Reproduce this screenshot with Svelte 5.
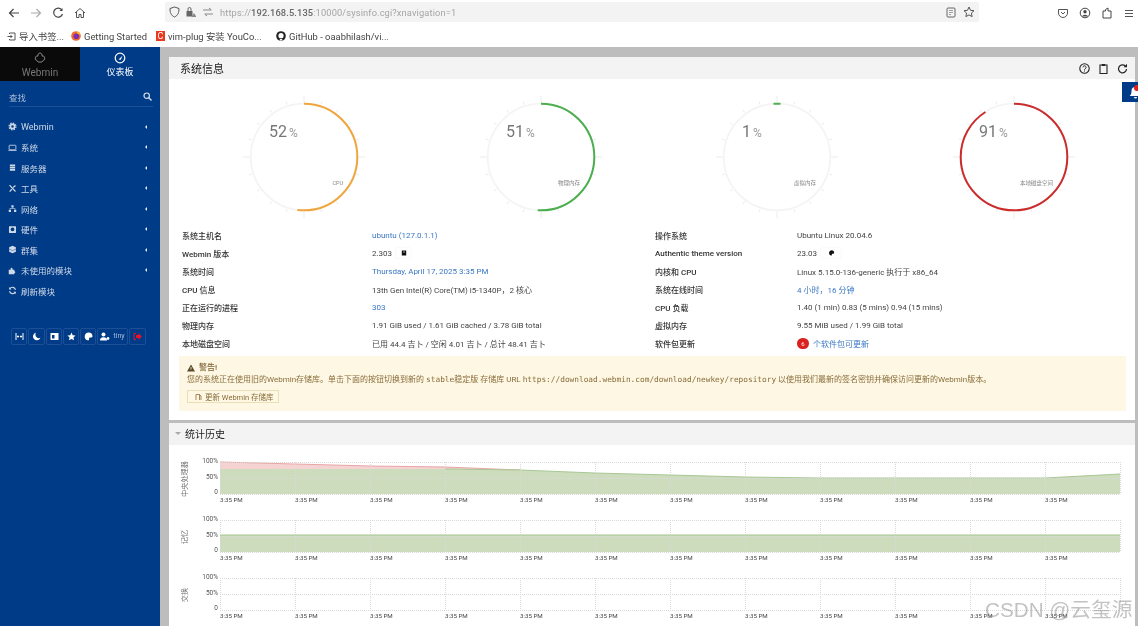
<script>
  const icons = {
    gear: '<circle cx="6" cy="6" r="2.8" fill="none" stroke="currentColor" stroke-width="2.2"/><circle cx="6" cy="6" r="4.6" fill="none" stroke="currentColor" stroke-width="1.6" stroke-dasharray="2 1.6"/>',
    laptop: '<rect x="1.5" y="3" width="9" height="6" rx=".6" fill="none" stroke="currentColor" stroke-width="1.1"/><path d="M0.5 10h11" stroke="currentColor" stroke-width="1"/>',
    server: '<path d="M2.5 2h7v2.2h-7zM2.5 5h7v2.2h-7zM2.5 8h7v2.2h-7z" fill="currentColor"/>',
    tools: '<path d="M2 1.5l8 8.5M10 2L6.8 4.6M2.2 10.2l3-3.2" stroke="currentColor" stroke-width="1.6" fill="none"/>',
    net: '<path d="M4.5 1.5h3v3h-3zM1 7.5h3v3H1zM8 7.5h3v3H8z" fill="currentColor"/><path d="M6 4.5v1.5M2.5 7.5V6h7v1.5" stroke="currentColor" stroke-width=".8" fill="none"/>',
    hw: '<path fill-rule="evenodd" d="M2 1.5h8a.7.7 0 0 1 .7.7v7.6a.7.7 0 0 1-.7.7H2a.7.7 0 0 1-.7-.7V2.200a.7.7 0 0 1 .7-.7zM6 3.200a2.600 2.600 0 1 0 0 5.200a2.600 2.600 0 0 0 0-5.200z" fill="currentColor"/>',
    cluster: '<path d="M6 1l4.500 2v6L6 11 1.500 9V3z" fill="currentColor"/><path d="M1.500 5.500L6 7.500l4.500-2" stroke="#003b87" stroke-width=".6" fill="none"/>',
    puzzle: '<path d="M1 5h2.500V3.500a1.300 1.300 0 0 1 2.600 0V5h2.400v2a1.200 1.200 0 0 1 0 2.400v1.600H1z" fill="currentColor"/>',
    sync: '<path d="M10 5A4.200 4.200 0 0 0 2.500 3.500M2 7a4.200 4.200 0 0 0 7.500 1.500" stroke="currentColor" stroke-width="1.500" fill="none"/><path d="M1.500 1.200v3.300h3.300zM10.500 10.800V7.500H7.200z" fill="currentColor"/>'
  };
  const menu = [
    { icon: 'gear', label: 'Webmin', arrow: true },
    { icon: 'laptop', label: '系统', arrow: true },
    { icon: 'server', label: '服务器', arrow: true },
    { icon: 'tools', label: '工具', arrow: true },
    { icon: 'net', label: '网络', arrow: true },
    { icon: 'hw', label: '硬件', arrow: true },
    { icon: 'cluster', label: '群集', arrow: true },
    { icon: 'puzzle', label: '未使用的模块', arrow: true },
    { icon: 'sync', label: '刷新模块', arrow: false }
  ];
  const gauges = [
    { pct: 52, color: '#f0a63f', label: 'CPU' },
    { pct: 51, color: '#4cae4f', label: '物理内存' },
    { pct: 1, color: '#4cae4f', label: '虚拟内存' },
    { pct: 91, color: '#cb2d2d', label: '本地磁盘空间' }
  ];
  const ticks = Array.from({ length: 20 }, (_, i) => i * 18);
  const labels = Array.from({ length: 12 }, (_, i) => 51 + i * 75);
  const vlines = Array.from({ length: 13 }, (_, i) => 51 + i * 75);
  const charts = [
    { title: '中央处理器' },
    { title: '记忆' },
    { title: '交换' }
  ];
  const cpuGreen = '51,14 276,14 351,15 426,18 501,20 576,22 651,23 876,23 951,19 951,39 51,39';
  const cpuRed = '51,7 126,9 201,11 276,12 351,15 276,14 51,14';
</script>

<div class="page">
  <header class="browser">
    <div class="nav">
      <div class="btns">
        <span class="bi"><svg width="12" height="12" viewBox="0 0 12 12"><path d="M11 6H1.500M5.500 2L1.500 6l4 4" fill="none" stroke="#444" stroke-width="1.200"/></svg></span>
        <span class="bi"><svg width="12" height="12" viewBox="0 0 12 12"><path d="M1 6h9.500M6.500 2l4 4-4 4" fill="none" stroke="#aaa" stroke-width="1.200"/></svg></span>
        <span class="bi"><svg width="12" height="12" viewBox="0 0 12 12"><path d="M10 3.200A4.500 4.500 0 1 0 10.500 7" fill="none" stroke="#444" stroke-width="1.200"/><path d="M10.500 1v3h-3z" fill="#444"/></svg></span>
        <span class="bi"><svg width="12" height="12" viewBox="0 0 12 12"><path d="M1 6l5-4.500L11 6M2.500 5v5.500h2.500V7.500h2v3h2.500V5" fill="none" stroke="#555" stroke-width="1"/></svg></span>
      </div>
      <div class="url">
        <svg class="u1" width="11" height="12" viewBox="0 0 11 12"><path d="M5.500 1L10 2.500c0 4-1 7-4.500 8.500C2 9.500 1 6.500 1 2.500z" fill="none" stroke="#555" stroke-width="1"/></svg>
        <svg class="u2" width="11" height="12" viewBox="0 0 11 12"><rect x="1.500" y="5" width="6" height="5.500" fill="#666"/><path d="M3 5V3a1.500 1.500 0 0 1 3 0v2" fill="none" stroke="#666"/><path d="M9 7l-2.500 4h5z" fill="#888"/></svg>
        <svg class="u3" width="12" height="10" viewBox="0 0 12 10"><path d="M1 3h8M7 1l2.500 2M11 7H3M5 9L2.500 7" fill="none" stroke="#888"/></svg>
        <span class="addr">https://<b>192.168.5.135</b>:10000/sysinfo.cgi?xnavigation=1</span>
        <svg class="u4" width="10" height="11" viewBox="0 0 10 11"><rect x="1" y="1" width="8" height="9" rx="1" fill="none" stroke="#666"/><path d="M3 3.500h4M3 5.500h4M3 7.500h2" stroke="#888" stroke-width=".8"/></svg>
        <svg class="u5" width="12" height="12" viewBox="0 0 12 12"><path d="M6 1l1.500 3.300 3.500.4-2.600 2.400.7 3.500L6 8.900l-3.100 1.700.7-3.500L1 4.700l3.500-.4z" fill="none" stroke="#555"/></svg>
      </div>
      <div class="tools">
        <span class="bi"><svg width="12" height="11" viewBox="0 0 12 11"><path d="M1.500 1.500h9v3.500a4.500 4.500 0 0 1-9 0z" fill="none" stroke="#555"/><path d="M4 4l2 2 2-2" fill="none" stroke="#555"/></svg></span>
        <span class="bi"><svg width="12" height="12" viewBox="0 0 12 12"><circle cx="6" cy="6" r="4.800" fill="none" stroke="#444"/><circle cx="6" cy="4.800" r="1.700" fill="#444"/><path d="M2.800 9.500a3.500 3 0 0 1 6.400 0z" fill="#444"/></svg></span>
        <span class="bi"><svg width="12" height="12" viewBox="0 0 12 12"><path d="M2 4h2.500V2.500L7 1v3h3v7H2z" fill="none" stroke="#444"/></svg></span>
        <span class="bi"><svg width="10" height="9" viewBox="0 0 10 9"><path d="M1 1.500h8M1 4.500h8M1 7.500h8" stroke="#555" stroke-width="1"/></svg></span>
      </div>
    </div>
    <div class="marks">
      <span class="mk m1"><svg width="9" height="9" viewBox="0 0 9 9"><path d="M2.500 2V1h5.500v7H2.500V7M0.500 4.500H5M3.500 3L5 4.500 3.500 6" fill="none" stroke="#444" stroke-width=".9"/></svg>导入书签...</span>
      <span class="mk m2"><svg width="10" height="10" viewBox="0 0 10 10"><circle cx="5" cy="5" r="4.800" fill="#f26a2a"/><circle cx="5.300" cy="5.300" r="2.800" fill="#7a2fb8"/><path d="M5 .3a4.700 4.700 0 0 1 4.500 3.500L7 3z" fill="#ffbd2e"/></svg>Getting Started</span>
      <span class="mk m3"><span class="csdn">C</span>vim-plug 安装 YouCo...</span>
      <span class="mk m4"><svg width="10" height="10" viewBox="0 0 10 10"><circle cx="5" cy="5" r="4.800" fill="#222"/><circle cx="5" cy="4.700" r="2.600" fill="#fff"/><path d="M3.800 9.500V8h2.400v1.500z" fill="#fff"/></svg>GitHub - oaabhilash/vi...</span>
    </div>
  </header>

  <div class="body">
    <aside class="side">
      <div class="tabs">
        <div class="tab dark">
          <svg width="12" height="12" viewBox="0 0 12 12"><path d="M6 1a2.200 2.200 0 0 1 2 3 2.300 2.300 0 0 1 1 4.500 2.300 2.300 0 0 1-3 1.500 2.300 2.300 0 0 1-3-1.500A2.300 2.300 0 0 1 4 4a2.200 2.200 0 0 1 2-3z" fill="none" stroke="#8a8a8a" stroke-width="1"/></svg>
          <span>Webmin</span>
        </div>
        <div class="tab">
          <svg width="12" height="12" viewBox="0 0 12 12"><circle cx="6" cy="6" r="4.800" fill="none" stroke="#fff" stroke-width="1.200"/><path d="M4.500 7.500L8.500 3.800 6.800 7.800z" fill="#fff"/></svg>
          <span>仪表板</span>
        </div>
      </div>
      <div class="search">
        <span>查找</span>
        <svg width="9" height="9" viewBox="0 0 9 9"><circle cx="3.700" cy="3.700" r="2.700" fill="none" stroke="#d5deea" stroke-width="1.200"/><path d="M5.800 5.800L8.500 8.500" stroke="#d5deea" stroke-width="1.400"/></svg>
      </div>
      <nav class="menu">
        {#each menu as m}
          <div class="item">
            <svg class="mi" width="9" height="9" viewBox="0 0 12 12">{@html icons[m.icon]}</svg>
            <span class="ml">{m.label}</span>
            {#if m.arrow}<i class="arrow"></i>{/if}
          </div>
        {/each}
      </nav>
      <div class="sbtns">
        <span class="sb w16"><svg width="9" height="9" viewBox="0 0 9 9"><path d="M1 1v7M8 1v7M2 4.500h2M7 4.500H5M3 3.500v2M6 3.500v2" stroke="#fff" fill="none"/></svg></span>
        <span class="sb w17"><svg width="9" height="9" viewBox="0 0 9 9"><path d="M4 .8a3.800 3.800 0 1 0 4.400 5A3.500 3.500 0 0 1 4 .8z" fill="#fff"/></svg></span>
        <span class="sb w16"><svg width="9" height="9" viewBox="0 0 9 9"><path fill-rule="evenodd" d="M.5 1h8v7h-8zM2 3v3.500h2.500V3z" fill="#fff"/></svg></span>
        <span class="sb w16"><svg width="9" height="9" viewBox="0 0 12 12"><path d="M6 .8l1.600 3.500 3.800.4-2.800 2.600.8 3.800L6 9.200l-3.400 1.900.8-3.800L.6 4.700l3.800-.4z" fill="#fff"/></svg></span>
        <span class="sb w16"><svg width="9" height="9" viewBox="0 0 9 9"><path d="M4.500.5a4 4 0 0 1 4 4c0 1.200-1.500 1-2.500 1s-1 1-1 2-1 1-1.500.8A4 4 0 0 1 4.500.5z" fill="#fff"/></svg></span>
        <span class="sb w31"><svg width="10" height="9" viewBox="0 0 10 9"><circle cx="3.500" cy="2.500" r="2" fill="#fff"/><path d="M0 8.500a3.500 3.200 0 0 1 7 0z" fill="#fff"/><circle cx="8" cy="6.500" r="1.400" fill="#fff"/></svg><em>tiny</em></span>
        <span class="sb w17"><svg width="9" height="9" viewBox="0 0 9 9"><path d="M3 1.500H1v6h2" fill="none" stroke="#e8122a"/><path d="M3 3h2.500V1L8.800 4.500 5.500 8V6H3z" fill="#e8122a"/></svg></span>
      </div>
    </aside>

    <main class="main">
      <section class="panel first">
        <div class="phead">
          <h2>系统信息</h2>
          <div class="pact">
            <svg width="11" height="11" viewBox="0 0 11 11"><circle cx="5.500" cy="5.500" r="4.700" fill="none" stroke="#222" stroke-width="1.100"/><path d="M3.900 4.300a1.600 1.500 0 1 1 2.500 1.300c-.6.400-.9.700-.9 1.300" fill="none" stroke="#222"/><path d="M5 7.600h1v1H5z" fill="#222"/></svg>
            <svg width="11" height="11" viewBox="0 0 11 11"><path d="M2 2h7v8.500H2z" fill="none" stroke="#222" stroke-width="1.100"/><path d="M3.800 1h3.400v2H3.800z" fill="#222"/></svg>
            <svg width="11" height="11" viewBox="0 0 11 11"><path d="M9.500 6a4 4 0 1 1-1.200-3" fill="none" stroke="#222" stroke-width="1.200"/><path d="M10 .8v3.400H6.600z" fill="#222"/></svg>
          </div>
        </div>

        <div class="gauges">
          {#each gauges as g}
            <svg class="gauge" width="130" height="130" viewBox="-65 -65 130 130">
              {#each ticks as t}
                <line x1="0" y1={t % 90 === 0 ? -54 : -55} x2="0" y2={t % 90 === 0 ? -61 : -58} transform="rotate({t})" class="tick" />
              {/each}
              <circle r="53.300" class="ring" />
              {#if g.pct === 1}
                <path d="M-3.500 -53.200 A53.300 53.300 0 0 1 3.500 -53.200" fill="none" stroke={g.color} stroke-width="2" />
              {:else}
                <circle r="53.300" fill="none" stroke={g.color} stroke-width="2" pathLength="100" stroke-dasharray="{g.pct} 100" transform="rotate(-90)" />
              {/if}
              <text x="-35" y="-20" class="num">{g.pct}<tspan class="pc" dx="2">%</tspan></text>
              <text x="39" y="28" text-anchor="end" class="glabel">{g.label}</text>
            </svg>
          {/each}
        </div>

        <div class="info">
          <div class="k">系统主机名</div><div class="v"><a href="#top">ubuntu (127.0.1.1)</a></div>
          <div class="k">操作系统</div><div class="v">Ubuntu Linux 20.04.6</div>

          <div class="k">Webmin 版本</div>
          <div class="v">2.303 <span class="mini"><svg width="6" height="6" viewBox="0 0 6 6"><path d="M.8.500h4.400v5H.8z" fill="#111"/><path d="M2 2h2" stroke="#fff" stroke-width=".6"/></svg></span></div>
          <div class="k">Authentic theme version</div>
          <div class="v">23.03 <span class="mini wide"><svg width="7" height="6" viewBox="0 0 9 9"><path d="M4.500.5a4 4 0 0 1 4 4c0 1.200-1.500 1-2.500 1s-1 1-1 2-1 1-1.500.8A4 4 0 0 1 4.500.5z" fill="#111"/></svg></span></div>

          <div class="k">系统时间</div><div class="v"><a href="#top">Thursday, April 17, 2025 3:35 PM</a></div>
          <div class="k">内核和 CPU</div><div class="v">Linux 5.15.0-136-generic 执行于 x86_64</div>

          <div class="k">CPU 信息</div><div class="v">13th Gen Intel(R) Core(TM) i5-1340P，2 核心</div>
          <div class="k">系统在线时间</div><div class="v"><a href="#top">4 小时，16 分钟</a></div>

          <div class="k">正在运行的进程</div><div class="v"><a href="#top">303</a></div>
          <div class="k">CPU 负载</div><div class="v">1.40 (1 min) 0.83 (5 mins) 0.94 (15 mins)</div>

          <div class="k">物理内存</div><div class="v">1.91 GiB used / 1.61 GiB cached / 3.78 GiB total</div>
          <div class="k">虚拟内存</div><div class="v">9.55 MiB used / 1.99 GiB total</div>

          <div class="k">本地磁盘空间</div><div class="v">已用 44.4 吉卜 / 空闲 4.01 吉卜 / 总计 48.41 吉卜</div>
          <div class="k">软件包更新</div><div class="v"><span class="badge">6</span><a href="#top">个软件包可更新</a></div>
        </div>

        <div class="warn">
          <div class="wh"><svg width="8" height="8" viewBox="0 0 8 8"><path d="M4 .5L8 7.500H0z" fill="#5a4a2a"/><path d="M4 3v2.500" stroke="#fdf7e3" stroke-width=".8"/></svg><b>警告!</b></div>
          <div class="wt">您的系统正在使用旧的Webmin存储库。单击下面的按钮切换到新的 <code>stable</code>稳定版 存储库 URL <code>https://download.webmin.com/download/newkey/repository</code> 以使用我们最新的签名密钥并确保访问更新的Webmin版本。</div>
          <span class="wbtn"><svg width="7" height="8" viewBox="0 0 7 8"><path d="M1 7V1.500h3.500V7M4.500 1.500L6 3v4" fill="none" stroke="#8a6d3b" stroke-width=".8"/></svg>更新 Webmin 存储库</span>
        </div>
      </section>

      <section class="panel second">
        <div class="phead small">
          <i class="down"></i>
          <h3>统计历史</h3>
        </div>
        <div class="charts">
          {#each charts as c, i}
            <svg class="chart" width="966" height="58" viewBox="0 0 966 58">
              <text class="ytitle" transform="translate(18 24) rotate(-90)" text-anchor="middle">{c.title}</text>
              <text class="ylab" x="49" y="8" text-anchor="end">100%</text>
              <text class="ylab" x="49" y="23.500" text-anchor="end">50%</text>
              <text class="ylab" x="49" y="39" text-anchor="end">0</text>
              {#if i === 0}
                <polygon points={cpuRed} fill="#f6d3d3" />
                <polyline points="51,7 126,9 201,11 276,12 351,15" fill="none" stroke="#e8a5a5" stroke-width="1" />
                <polygon points={cpuGreen} fill="#cddcbc" />
                <polyline points="276,14 351,15 426,18 501,20 576,22 651,23 876,23 951,19" fill="none" stroke="#a9c795" stroke-width="1" />
              {:else if i === 1}
                <rect x="51" y="22" width="900" height="17" fill="#cddcbc" />
                <line x1="51" x2="951" y1="22" y2="22" stroke="#a3c48f" stroke-width="1" />
              {/if}
              {#each [7, 23, 39] as y}
                <line x1="51" x2="951" y1={y + .5} y2={y + .5} class="grid" />
              {/each}
              {#each vlines as x}
                <line x1={x + .5} x2={x + .5} y1="7" y2="39" class="grid" />
              {/each}
              {#each labels as x}
                <text class="xlab" x={x} y="46.500">3:35 PM</text>
              {/each}
            </svg>
          {/each}
        </div>
      </section>

      <div class="bell">
        <svg width="13" height="13" viewBox="0 0 13 13"><path d="M6.500 1a4 4 0 0 1 4 4c0 3 .8 4 1.800 5H.7c1-1 1.800-2 1.800-5a4 4 0 0 1 4-4zM5 11h3a1.500 1.500 0 0 1-3 0z" fill="#fff"/></svg>
        <i></i>
      </div>
    </main>
  </div>
  <div class="wm">CSDN @云玺源</div>
</div>

<style>
  :global(body) { margin: 0; background: #fff; }
  .page {
    position: relative;
    width: 1138px;
    height: 626px;
    overflow: hidden;
    font-family: Roboto, "Noto Sans CJK SC", sans-serif;
    color: #333;
    display: flex;
    flex-direction: column;
    filter: blur(.45px);
  }
  svg { display: block; flex: none; }

  .browser { height: 47px; flex: none; background: #fff; overflow: hidden; }
  .nav { height: 26px; display: flex; align-items: flex-start; padding: 2px 0 0 3px; box-sizing: border-box; }
  .btns, .tools { display: flex; flex: none; }
  .bi { width: 22px; height: 22px; display: flex; align-items: center; justify-content: center; }
  .btns { margin-right: 74px; }
  .url { flex: none; width: 814px; height: 20px; background: #f3f3f4; display: flex; align-items: center; border-radius: 2px; color: #a5a5a5; font-size: 9.3px; }
  .u1 { margin-left: 4px; }
  .u2 { margin-left: 5px; }
  .u3 { margin-left: 6px; }
  .addr { margin-left: 6px; letter-spacing: .12px; }
  .addr b { font-weight: 500; color: #666; }
  .u4 { margin-left: auto; }
  .u5 { margin: 0 4px 0 7px; }
  .tools { margin-left: 73px; }

  .marks { height: 21px; display: flex; align-items: center; padding-left: 7px; font-size: 9.4px; color: #444; padding-bottom: 1px; box-sizing: border-box; }
  .mk { display: flex; align-items: center; gap: 3px; white-space: nowrap; }
  .m1 { width: 64px; }
  .m2 { width: 85px; }
  .m3 { width: 120px; }
  .csdn { width: 9px; height: 10px; background: #e83a1e; color: #fff; font-size: 9px; line-height: 10px; text-align: center; }

  .body { flex: 1; display: flex; min-height: 0; background: #bdbdbd; }
  .side { width: 160px; flex: none; background: #003b87; color: #cfd9e8; }
  .tabs { display: flex; height: 34px; }
  .tab { width: 80px; display: flex; flex-direction: column; align-items: center; padding-top: 5px; box-sizing: border-box; color: #fff; font-size: 9px; gap: 3px; line-height: 11px; }
  .tab.dark { background: #0a0a0a; color: #777; font-size: 10px; }
  .search { height: 26px; margin: 0 7px 0 9px; padding: 6px 1px 0 0; box-sizing: border-box; display: flex; align-items: center; justify-content: space-between; font-size: 8.5px; color: #a9bcd6; border-bottom: 1px solid #1c4f94; }
  .menu { margin-top: 9.5px; }
  .item { height: 20.5px; display: flex; align-items: center; padding: 0 13px 0 8px; font-size: 8.5px; }
  .item:first-child .ml { font-size: 9px; }
  .ml { margin-left: 4px; }
  .arrow { margin-left: auto; width: 0; height: 0; border-style: solid; border-width: 2.2px 2.5px 2.2px 0; border-color: transparent #e6ecf4 transparent transparent; }
  .sbtns { margin: 26.5px 0 0 11px; display: flex; gap: 1px; }
  .sb { height: 17px; box-sizing: border-box; border: 1px solid #1d4f96; border-radius: 2px; display: flex; align-items: center; justify-content: center; gap: 3px; color: #fff; }
  .w16 { width: 16px; }
  .w17 { width: 17px; }
  .w31 { width: 31px; }
  .sb em { font-style: normal; font-size: 7px; color: #a9bcd6; }

  .main { flex: 1; padding: 10px 3px 0 9px; position: relative; min-width: 0; }
  .panel { background: #fff; }
  .first { height: 363px; overflow: hidden; }
  .second { margin-top: 3px; height: 203px; }
  .phead { height: 22px; background: #f3f3f3; display: flex; align-items: center; padding: 0 7px 0 11px; }
  .phead.small { padding: 0 0 1px 6px; height: 22px; box-sizing: border-box; }
  h2, h3 { margin: 0; font-weight: 400; color: #222; }
  h2 { font-size: 11px; }
  h3 { font-size: 10px; margin-left: 4px; }
  .down { width: 0; height: 0; border-style: solid; border-width: 3px 3px 0 3px; border-color: #aaa transparent transparent transparent; }
  .pact { margin-left: auto; display: flex; gap: 8px; }

  .gauges { display: grid; grid-template-columns: repeat(4, 236.5px); padding: 13px 0 0 17px; justify-items: center; }
  .tick { stroke: #ececec; stroke-width: 1; }
  .ring { fill: none; stroke: #f4f4f4; stroke-width: 1.800; }
  .num { font-size: 16px; fill: #777; font-weight: 400; }
  .pc { font-size: 12px; fill: #999; }
  .glabel { font-size: 5.5px; fill: #888; }

  .info { display: grid; grid-template-columns: 190px 283px 142px 1fr; grid-auto-rows: 18px; margin: 4px 0 0 13px; font-size: 8px; align-items: center; }
  .k { color: #333; font-weight: 500; }
  .v { color: #444; display: flex; align-items: center; gap: 3px; white-space: nowrap; }
  a { color: #3b78c4; text-decoration: none; }
  .mini { width: 15px; height: 10px; margin-left: 1px; background: #fff; box-shadow: 0 0 1px #ccc; border-radius: 1px; display: flex; align-items: center; justify-content: center; }
  .mini.wide { width: 20px; }
  .badge { width: 12px; height: 11px; border-radius: 6px; background: #d9211f; color: #fff; font-size: 6px; display: flex; align-items: center; justify-content: center; margin-right: 1px; }

  .warn { margin: 4px 9px 0 10px; height: 55px; background: #fdf7e3; padding: 7px 8px 0; box-sizing: border-box; color: #8a6d3b; font-size: 8px; }
  .wh { display: flex; align-items: center; gap: 4px; height: 10px; line-height: 10px; color: #7a5f30; }
  .wh b { font-weight: 500; }
  .wt { margin-top: 1px; height: 12px; line-height: 12px; white-space: nowrap; }
  code { font-family: "DejaVu Sans Mono", monospace; font-size: 7.800px; }
  .wbtn { display: inline-flex; align-items: center; gap: 3px; margin-top: 4px; width: 92px; height: 13px; box-sizing: border-box; padding-left: 7px; border: 1px solid #eadfb8; font-size: 7.500px; white-space: nowrap; }

  .charts { padding-top: 10px; }
  .chart { margin: 0; }
  .grid { stroke: #d9d9d9; stroke-width: 1; stroke-dasharray: 1 1; }
  .ytitle { font-size: 7.200px; fill: #777; }
  .ylab { font-size: 6.500px; fill: #555; }
  .xlab { font-size: 6.200px; fill: #444; }

  .bell { position: absolute; right: 0; top: 35px; width: 16px; height: 20px; background: #003b87; display: flex; align-items: center; padding-left: 7px; box-sizing: border-box; overflow: hidden; }
  .bell i { position: absolute; right: -2px; top: 3px; width: 6px; height: 6px; border-radius: 50%; background: #e02020; }

  .wm { position: absolute; left: 985px; top: 593px; font-size: 20.700px; color: rgba(120,120,120,.45); white-space: nowrap; font-family: "Liberation Sans", "Noto Sans CJK SC", sans-serif; }
</style>
